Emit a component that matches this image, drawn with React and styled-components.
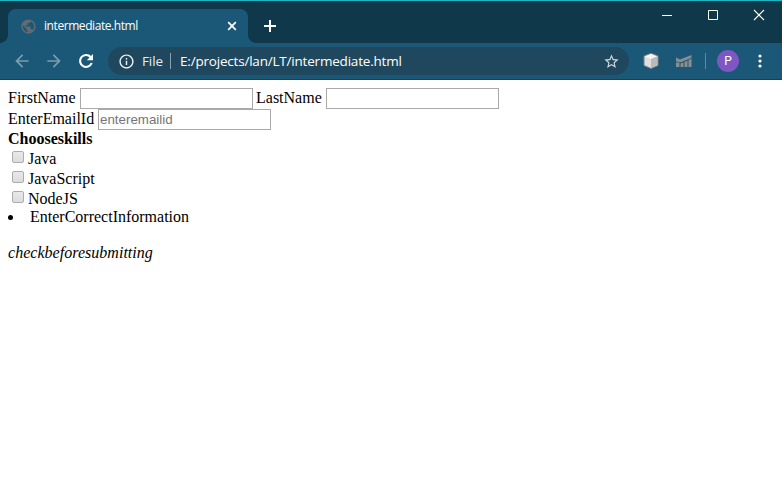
import React from "react";
import styled, { createGlobalStyle } from "styled-components";
import { MdArrowBack, MdArrowForward, MdInfoOutline, MdStarBorder, MdPublic } from "react-icons/md";

const GlobalStyle = createGlobalStyle`
  * { box-sizing: border-box; }
  body { margin: 0; background: #fff; overflow: hidden; }
`;

const Window = styled.div`
  width: 782px;
  height: 502px;
  display: flex;
  flex-direction: column;
  background: #fff;
`;

const TabStrip = styled.header`
  height: 43px;
  flex: none;
  display: flex;
  align-items: flex-end;
  padding-left: 8px;
  border-top: 1px solid #1ab8c6;
  background: #10384b;
`;

const Tab = styled.div`
  position: relative;
  width: 240px;
  height: 34px;
  display: flex;
  align-items: center;
  padding: 0 10px 0 12px;
  border-radius: 8px 8px 0 0;
  background: #1b5877;
  color: #fff;
  &::before, &::after {
    content: "";
    position: absolute;
    bottom: 0;
    width: 8px;
    height: 8px;
  }
  &::before {
    left: -8px;
    background: radial-gradient(circle at 0 0, #10384b 7.5px, #1b5877 8.3px);
  }
  &::after {
    right: -8px;
    background: radial-gradient(circle at 100% 0, #10384b 7.5px, #1b5877 8.3px);
  }
`;

const Globe = styled(MdPublic)`
  width: 17px;
  height: 17px;
  margin-right: 7px;
  color: #646b70;
`;

const TabTitle = styled.span`
  flex: 1;
  font: 12px/16px "Open Sans", sans-serif;
  letter-spacing: -0.43px;
`;

const CloseButton = styled.svg`
  width: 12px;
  height: 12px;
`;

const NewTab = styled.svg`
  width: 12px;
  height: 12px;
  margin: 0 0 11px 16px;
`;

const Controls = styled.div`
  display: flex;
  align-self: flex-start;
  margin: 8px 17px 0 auto;
  gap: 34px;
`;

const ControlIcon = styled.svg`
  width: 12px;
  height: 12px;
`;

const Toolbar = styled.nav`
  height: 37px;
  flex: none;
  display: flex;
  align-items: center;
  padding: 0 12px;
  background: #1b5877;
  border-bottom: 1px solid #164158;
`;

const NavIcon = styled.span`
  display: flex;
  width: 20px;
  height: 20px;
  margin-right: 12px;
  color: ${(p) => (p.$dim ? "#7c9dae" : "#fff")};
  svg {
    width: 20px;
    height: 20px;
  }
`;

const AddressBar = styled.div`
  width: 521px;
  height: 28px;
  flex: none;
  display: flex;
  align-items: center;
  padding: 0 9px 0 10px;
  border-radius: 14px;
  background: #1f485e;
  color: #fff;
  font: 13.5px/18px "Open Sans", sans-serif;
`;

const InfoIcon = styled(MdInfoOutline)`
  width: 17px;
  height: 17px;
  margin-right: 7px;
  color: #eef2f4;
`;

const Scheme = styled.span`
  width: 28px;
  color: #e6ecef;
  letter-spacing: -0.1px;
`;

const Divider = styled.span`
  width: 1px;
  height: 16px;
  flex: none;
  margin: ${(p) => p.$margin};
  background: ${(p) => p.$color};
`;

const Url = styled.span`
  flex: 1;
  white-space: nowrap;
  letter-spacing: -0.2px;
`;

const Star = styled(MdStarBorder)`
  width: 17px;
  height: 17px;
  color: #d0d9df;
`;

const Extension = styled.svg`
  width: 16px;
  height: 18px;
  flex: none;
  margin-left: ${(p) => p.$gap}px;
`;

const Avatar = styled.span`
  width: 22px;
  height: 22px;
  flex: none;
  border-radius: 50%;
  background: #7e57c2;
  color: #fff;
  text-align: center;
  font: 12px/22px Roboto, sans-serif;
`;

const Menu = styled.svg`
  width: 4px;
  height: 14px;
  margin-left: 19px;
  flex: none;
`;

const Page = styled.main`
  padding: 8px;
  color: #000;
  font: 16px/18px "Liberation Serif", "Times New Roman", serif;
`;

const FieldRow = styled.div`
  display: flex;
  height: 21px;
`;

const Label = styled.label`
  width: ${(p) => p.$width}px;
  line-height: 19px;
  white-space: nowrap;
`;

const TextInput = styled.input`
  width: 173px;
  height: 21px;
  margin: 0 3px 0 0;
  padding: 1px;
  border: 1px solid #a9a9a9;
  border-radius: 0;
  background: #fff;
  outline: 0;
  font: 13.33px "Liberation Sans", Arial, sans-serif;
  &::placeholder { color: #757575; }
`;

const Heading = styled.strong`
  display: block;
  height: 19px;
  line-height: 18px;
`;

const SkillRow = styled.label`
  display: flex;
  height: 20px;
  line-height: 20px;
  padding-left: 4px;
`;

const Checkbox = styled.input`
  appearance: none;
  width: 12px;
  height: 12px;
  margin: 2px 4px 0 0;
  border: 1px solid #acacac;
  border-radius: 2px;
  background: linear-gradient(#e9e9e9, #dcdcdc);
`;

const Bullet = styled.li`
  display: flex;
  align-items: center;
  height: 18px;
  gap: 17px;
  margin-top: -1px;
  &::before {
    content: "";
    width: 5px;
    height: 5px;
    border-radius: 50%;
    background: #000;
  }
`;

const Note = styled.em`
  display: block;
  margin-top: 18px;
  letter-spacing: 0.03px;
`;

const skills = ["Java", "JavaScript", "NodeJS"];

export default function App() {
  return (
    <Window>
      <GlobalStyle />
      <TabStrip>
        <Tab>
          <Globe />
          <TabTitle>intermediate.html</TabTitle>
          <CloseButton viewBox="0 0 12 12" stroke="#fff" strokeWidth="1.7"><path d="M2.2 2.2l7.6 7.6M9.8 2.2L2.2 9.8" /></CloseButton>
        </Tab>
        <NewTab viewBox="0 0 12 12" stroke="#fff" strokeWidth="2"><path d="M6 0v12M0 6h12" /></NewTab>
        <Controls>
          <ControlIcon viewBox="0 0 12 12" stroke="#fff"><path d="M1 6.500h10" /></ControlIcon>
          <ControlIcon viewBox="0 0 12 12" stroke="#fff" fill="none"><path d="M1.5 1.500h9v9h-9z" /></ControlIcon>
          <ControlIcon viewBox="0 0 12 12" stroke="#fff" strokeWidth="1.1"><path d="M1 1l10 10M11 1L1 11" /></ControlIcon>
        </Controls>
      </TabStrip>
      <Toolbar>
        <NavIcon $dim><MdArrowBack /></NavIcon>
        <NavIcon $dim><MdArrowForward /></NavIcon>
        <NavIcon>
          <svg viewBox="0 0 20 20">
            <path d="M14.6 6A6 6 0 1 0 15.700 12" fill="none" stroke="#fff" strokeWidth="2.1" />
            <path d="M17 3v6.200h-6.200z" fill="#fff" />
          </svg>
        </NavIcon>
        <AddressBar>
          <InfoIcon />
          <Scheme>File</Scheme>
          <Divider $margin="0 9px 0 0" $color="#8aa1ae" />
          <Url>E:/projects/lan/LT/intermediate.html</Url>
          <Star />
        </AddressBar>
        <Extension $gap={14} viewBox="0 0 16 18">
          <path d="M8 1.3L15 4v9.5l-7 3-7-3V4z" fill="#dedede" stroke="#807d7a" />
          <path d="M8 2l6 2.5L8 7 2 4.500z" fill="#f5f5f5" />
          <path d="M8 7l6-2.500V13l-6 2.800z" fill="#b9b9b9" />
        </Extension>
        <Extension $gap={17} viewBox="0 0 16 18" fill="#8d8d8d">
          <path d="M0 5.500l4 2L15.500 3v2.700L5 10.300 0 9.500zM0 10.500h3.500V15H0zM4.500 11.500l3-1V15h-3zM8.500 10l3-1.500V15h-3zM12.500 8l3-1.500V15h-3z" />
        </Extension>
        <Divider $margin="0 11px 0 13px" $color="#5b8ba3" />
        <Avatar>P</Avatar>
        <Menu viewBox="0 0 4 14" fill="#fff">
          <circle cx="2" cy="2" r="1.6" />
          <circle cx="2" cy="7" r="1.6" />
          <circle cx="2" cy="12" r="1.6" />
        </Menu>
      </Toolbar>
      <Page>
        <FieldRow>
          <Label $width={72}>FirstName</Label>
          <TextInput />
          <Label $width={70}>LastName</Label>
          <TextInput />
        </FieldRow>
        <FieldRow>
          <Label $width={90}>EnterEmailId</Label>
          <TextInput placeholder="enteremailid" />
        </FieldRow>
        <Heading>Chooseskills</Heading>
        {skills.map((s) => <SkillRow key={s}><Checkbox type="checkbox" />{s}</SkillRow>)}
        <Bullet>EnterCorrectInformation</Bullet>
        <Note>checkbeforesubmitting</Note>
      </Page>
    </Window>
  );
}
